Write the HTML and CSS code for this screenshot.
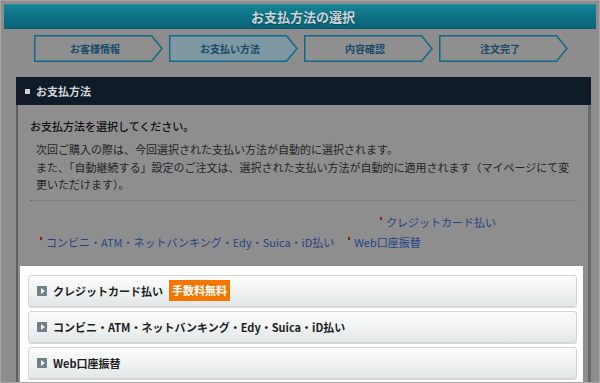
FILE: index.html
```html
<!DOCTYPE html>
<html lang="ja">
<head>
<meta charset="utf-8">
<title>お支払方法の選択</title>
<link rel="stylesheet" href="styles.css">
</head>
<body>
<div class="page">
  <div class="topbar"><h1 class="title">お支払方法の選択</h1></div>
  <div class="steps">
    <svg class="step" width="129" height="27" viewBox="0 0 129 27"><polygon points="0.75,0.75 117.5,0.75 128,13.5 117.5,26.25 0.75,26.25" class="step-shape"/><text x="61" y="17.5" class="step-text">お客様情報</text></svg>
    <svg class="step" width="129" height="27" viewBox="0 0 129 27"><polygon points="0.75,0.75 117.5,0.75 128,13.5 117.5,26.25 0.75,26.25" class="step-shape active"/><text x="61" y="17.5" class="step-text">お支払い方法</text></svg>
    <svg class="step" width="129" height="27" viewBox="0 0 129 27"><polygon points="0.75,0.75 117.5,0.75 128,13.5 117.5,26.25 0.75,26.25" class="step-shape"/><text x="61" y="17.5" class="step-text">内容確認</text></svg>
    <svg class="step" width="129" height="27" viewBox="0 0 129 27"><polygon points="0.75,0.75 117.5,0.75 128,13.5 117.5,26.25 0.75,26.25" class="step-shape"/><text x="61" y="17.5" class="step-text">注文完了</text></svg>
  </div>
  <div class="panel">
    <div class="panel-head"><span class="sq"></span><span class="panel-title">お支払方法</span></div>
    <div class="panel-body">
      <div class="intro">
        <p class="lead">お支払方法を選択してください。</p>
        <p class="note">次回ご購入の際は、今回選択された支払い方法が自動的に選択されます。<br>また、「自動継続する」設定のご注文は、選択された支払い方法が自動的に適用されます（マイページにて変更いただけます）。</p>
      </div>
      <div class="links">
        <div class="link-row first"><a class="link">クレジットカード払い</a></div>
        <div class="link-row"><a class="link">コンビニ・ATM・ネットバンキング・Edy・Suica・iD払い</a><a class="link">Web口座振替</a></div>
      </div>
      <div class="methods">
        <div class="method"><span class="play"></span><span class="mname">クレジットカード払い</span><span class="badge">手数料無料</span></div>
        <div class="method"><span class="play"></span><span class="mname">コンビニ・ATM・ネットバンキング・Edy・Suica・iD払い</span></div>
        <div class="method"><span class="play"></span><span class="mname">Web口座振替</span></div>
      </div>
    </div>
  </div>
</div>
</body>
</html>
```
FILE: styles.css
```css
html, body {
  margin: 0;
  padding: 0;
}
body {
  background: #8d8d8d;
  font-family: "Noto Sans CJK JP", "Noto Sans", sans-serif;
  width: 600px;
  height: 383px;
  overflow: hidden;
}
.page {
  box-sizing: border-box;
  width: 600px;
  height: 383px;
  border: 1px solid #a6a6a6;
  padding: 3px 3px 0 3px;
  overflow: hidden;
}
.topbar {
  height: 25px;
  background: linear-gradient(#168395, #0d7186 50%, #0a6479);
  border-top: 1px solid #2a8e9e;
  border-bottom: 1px solid #0a5a6c;
  box-sizing: border-box;
  display: flex;
  align-items: center;
  justify-content: center;
}
.title {
  margin: 0;
  font-size: 13px;
  font-weight: bold;
  color: #cfd3d4;
  text-shadow: 0 1px 1px #0a4a58;
  line-height: 1;
  padding-left: 6px;
}
.steps {
  display: flex;
  gap: 6px;
  padding: 6px 0 0 30px;
  height: 27px;
}
.step {
  display: block;
}
.step-shape {
  fill: #8f8f8f;
  stroke: #0f6a8c;
  stroke-width: 1.5;
}
.step-shape.active {
  fill: #7e98a3;
}
.step-text {
  font-family: "Noto Sans CJK JP", sans-serif;
  font-size: 10px;
  font-weight: bold;
  fill: #174a6b;
  text-anchor: middle;
}
.panel {
  margin: 15px 5px 0 12px;
}
.panel-head {
  height: 28px;
  background: #0f1c28;
  border-bottom: 1px solid #15212c;
  box-sizing: border-box;
  display: flex;
  align-items: center;
  padding-left: 9px;
}
.sq {
  width: 5px;
  height: 5px;
  background: #cfcfd2;
  margin-right: 6px;
  margin-top: 1px;
}
.panel-title {
  font-size: 11px;
  font-weight: bold;
  color: #d4d6d8;
}
.panel-body {
  border-left: 2px solid #5f5f5f;
  border-right: 3px solid #6a6a6a;
  height: 300px;
  background: #8e8e8e;
}
.intro {
  margin: 0 10px 0 12px;
  padding-top: 12px;
  padding-bottom: 6px;
  border-bottom: 1px dotted #6e6e6e;
}
.lead {
  margin: 0 0 6px 0;
  font-size: 11px;
  font-weight: 500;
  color: #101010;
  line-height: 18px;
}
.note {
  margin: 0;
  padding-left: 6px;
  font-size: 11px;
  color: #252525;
  line-height: 17.5px;
}
.links {
  padding: 12px 0 0 0;
  height: 65px;
  box-sizing: border-box;
}
.link-row {
  display: flex;
  gap: 14px;
  padding-left: 22px;
  height: 20px;
  align-items: center;
}
.link-row.first {
  padding-left: 362px;
}
.link {
  font-size: 11px;
  color: #26438a;
  position: relative;
  padding-left: 6px;
  line-height: 1;
}
.link::before {
  content: "";
  position: absolute;
  left: 0;
  top: 0;
  width: 2px;
  height: 3px;
  background: #8a1c1c;
}
.methods {
  background: #ffffff;
  margin: 0 5px 0 2px;
  padding: 9px 6px 0 8px;
  display: flex;
  flex-direction: column;
  gap: 4px;
  height: 120px;
}
.method {
  box-sizing: border-box;
  height: 32px;
  border: 1px solid #d2d6d7;
  border-radius: 3px;
  background: linear-gradient(#fbfbfb, #f1f3f3 50%, #e2e6e7);
  box-shadow: 0 1px 0 #d6dadb;
  display: flex;
  align-items: center;
  padding-left: 8px;
  flex-shrink: 0;
}
.play {
  width: 10px;
  height: 10px;
  background: #6d7f87;
  border-radius: 1px;
  position: relative;
  margin-right: 6px;
  flex-shrink: 0;
}
.play::after {
  content: "";
  position: absolute;
  left: 4px;
  top: 2px;
  border-left: 4px solid #f2f4f4;
  border-top: 3px solid transparent;
  border-bottom: 3px solid transparent;
}
.mname {
  font-size: 11px;
  font-weight: bold;
  color: #1e1e1e;
}
.badge {
  margin-left: 6px;
  background: #f27600;
  color: #ffffff;
  font-size: 11px;
  font-weight: bold;
  height: 21px;
  line-height: 21px;
  padding: 0 3px;
}
```
